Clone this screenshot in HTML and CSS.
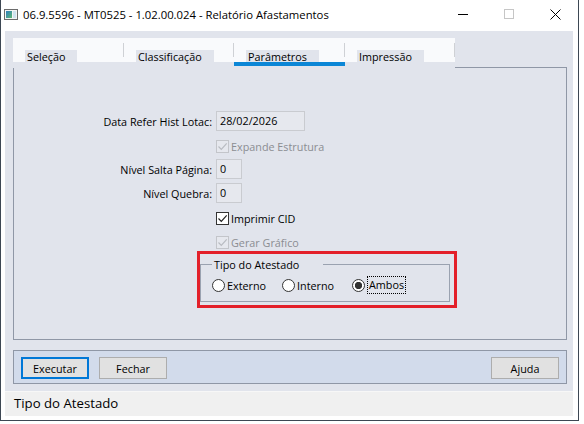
FILE: index.html
```html
<!DOCTYPE html>
<html lang="pt-BR">
<head>
  <meta charset="UTF-8" />
  <title>Relatório Afastamentos</title>
  <link rel="stylesheet" href="styles.css">
</head>
<body>

  <div class="window">
    <div class="titlebar">
      <svg class="app-icon" width="14" height="11" viewBox="0 0 14 11">
        <defs>
          <linearGradient id="ic" x1="0" y1="0" x2="1" y2="1">
            <stop offset="0" stop-color="#2f7fc0"/>
            <stop offset="1" stop-color="#5fb872"/>
          </linearGradient>
        </defs>
        <rect x="0.5" y="0.5" width="13" height="10" fill="#f4f4f4" stroke="#6b6b6b"/>
        <rect x="2" y="2" width="6" height="7" fill="url(#ic)"/>
        <rect x="9" y="2" width="3" height="7" fill="#cfe3ef"/>
      </svg>
      <span class="title">06.9.5596 - MT0525 - 1.02.00.024 - Relatório Afastamentos</span>
      <div class="caption">
        <span class="cap"><svg width="10" height="10" viewBox="0 0 10 10"><path d="M0 5.5h10" stroke="#000"/></svg></span>
        <span class="cap"><svg width="10" height="10" viewBox="0 0 10 10"><rect x="0.5" y="0.5" width="9" height="9" fill="none" stroke="#c6c6c6"/></svg></span>
        <span class="cap"><svg width="11" height="11" viewBox="0 0 11 11"><path d="M0.5 0.5l10 10M10.5 0.5l-10 10" stroke="#000"/></svg></span>
      </div>
    </div>

    <div class="client">
      <div class="tabbar">
        <div class="tabs">
          <div class="tab"><span class="tab-label">Seleção</span></div>
          <div class="tab"><span class="tab-label">Classificação</span></div>
          <div class="tab active"><span class="tab-label">Parâmetros</span></div>
          <div class="tab"><span class="tab-label">Impressão</span></div>
        </div>
        <div class="tab-fill"></div>
      </div>

      <div class="panel">
        <div class="form">
          <span class="lbl">Data Refer Hist Lotac:</span>
          <div class="ctl"><span class="field wide">28/02/2026</span></div>

          <div class="ctl opt disabled">
            <span class="check"><svg width="11" height="11" viewBox="0 0 11 11"><path d="M1.5 5.5l2.8 2.8 5.4-6" fill="none" stroke="#b9bcc2" stroke-width="1.2"/></svg></span>
            Expande Estrutura
          </div>

          <span class="lbl">Nível Salta Página:</span>
          <div class="ctl"><span class="field short">0</span></div>

          <span class="lbl">Nível Quebra:</span>
          <div class="ctl"><span class="field short">0</span></div>

          <div class="ctl opt">
            <span class="check on"><svg width="11" height="11" viewBox="0 0 11 11"><path d="M1.5 5.5l2.8 2.8 5.4-6" fill="none" stroke="#222" stroke-width="1.2"/></svg></span>
            Imprimir CID
          </div>

          <div class="ctl opt disabled">
            <span class="check"><svg width="11" height="11" viewBox="0 0 11 11"><path d="M1.5 5.5l2.8 2.8 5.4-6" fill="none" stroke="#b9bcc2" stroke-width="1.2"/></svg></span>
            Gerar Gráfico
          </div>
        </div>

        <div class="highlight">
          <div class="group">
            <span class="group-title">Tipo do Atestado</span>
            <div class="radios">
              <span class="radio"><span class="dot"></span>Externo</span>
              <span class="radio"><span class="dot"></span>Interno</span>
              <span class="radio"><span class="dot on"></span><span class="focus">Ambos</span></span>
            </div>
          </div>
        </div>
      </div>

      <div class="buttonbar">
        <button class="btn default">Executar</button>
        <button class="btn">Fechar</button>
        <button class="btn help">Ajuda</button>
      </div>
    </div>

    <div class="statusbar">Tipo do Atestado</div>
  </div>

</body>
</html>
```

FILE: styles.css
```css
* {
  box-sizing: border-box;
}
body {
  margin: 0;
  background: #fff;
  color: #000;
  font-family: "Open Sans", "Noto Sans", sans-serif;
  font-size: 10.8px;
}
.window {
  width: 579px;
  height: 421px;
  border: 1px solid #3d4753;
  border-top: 0;
  padding: 0 5px 4px 4px;
  background: #fff;
}

/* barra de título */
.titlebar {
  display: flex;
  align-items: center;
  height: 31px;
  margin: 0 -5px 0 -4px;
  padding: 0 0 3px 3px;
}
.app-icon {
  display: block;
}
.title {
  margin-left: 5px;
  font-size: 11.3px;
}
.caption {
  display: flex;
  margin-left: auto;
}
.cap {
  display: flex;
  align-items: center;
  justify-content: center;
  width: 46px;
  height: 28px;
}
.cap svg {
  display: block;
}

/* área cliente */
.client {
  height: 360px;
  background: #e1e4ec;
  padding: 7px 6px 7px 8px;
}
.tabbar {
  display: flex;
  height: 30px;
}
.tabs {
  display: grid;
  grid-template-columns: 111px 110px 111px 110px;
  align-items: start;
}
.tab {
  position: relative;
  height: 24px;
  padding-left: 12px;
  background: #f9fafc;
}
.tab::before {
  content: "";
  position: absolute;
  right: 0;
  top: 5px;
  width: 1px;
  height: 14px;
  background: #cfd1d5;
}
.tab.active {
  height: 28px;
  border-bottom: 4px solid #0b86d6;
}
.tab-label {
  display: inline-block;
  margin-top: 12px;
  height: 12px;
  line-height: 13px;
  padding: 0 12px 0 2px;
  background: #e1e4ec;
}
.tab-fill {
  flex: 1;
  border-bottom: 1px solid #8f97a6;
}

.panel {
  height: 272px;
  border: 1px solid #8f97a6;
  border-top: 0;
  padding-top: 41px;
}
.form {
  display: grid;
  grid-template-columns: 198px auto;
  grid-auto-rows: 24px;
  column-gap: 4px;
  align-items: center;
}
.lbl {
  text-align: right;
}
.ctl {
  grid-column: 2;
  display: flex;
  align-items: center;
}
.field {
  display: block;
  height: 20px;
  line-height: 18px;
  padding-left: 3px;
  border: 1px solid #c9cbd0;
  background: #e6e8ee;
}
.field.wide {
  width: 89px;
}
.field.short {
  width: 26px;
}
.opt {
  margin-top: 2px;
}
.check {
  display: flex;
  align-items: center;
  justify-content: center;
  width: 13px;
  height: 13px;
  margin-right: 2px;
  border: 1px solid #c3c5ca;
  background: #e6e8ee;
}
.check.on {
  border-color: #333;
  background: #fff;
}
.disabled {
  color: #8b8d92;
}

/* destaque em volta do grupo */
.highlight {
  width: 260px;
  height: 57px;
  margin: -2px 0 0 183px;
  border: 3px solid #e3202a;
}
.group {
  width: 250px;
  height: 38px;
  margin-top: 10px;
  border: 1px solid #9aa2b0;
}
.group-title {
  display: block;
  width: 111px;
  height: 15px;
  line-height: 15px;
  margin: -8px 0 0 11px;
  padding-left: 2px;
  background: #e1e4ec;
}
.radios {
  display: flex;
  margin-top: 4px;
  padding-left: 11px;
}
.radio {
  display: flex;
  align-items: center;
  width: 70px;
  height: 18px;
}
.dot {
  width: 13px;
  height: 13px;
  margin-right: 2px;
  border: 1px solid #333;
  border-radius: 50%;
  background: #fff;
}
.dot.on {
  background: radial-gradient(circle, #333 3.4px, #fff 3.9px);
}
.focus {
  height: 18px;
  line-height: 16px;
  padding: 0 1px;
  border: 1px dotted #000;
}

/* botões */
.buttonbar {
  display: flex;
  gap: 10px;
  height: 34px;
  margin-top: 10px;
  padding: 6px 7px 0 7px;
  border: 1px solid #8f97a6;
  background: #d2dbeb;
}
.btn {
  width: 68px;
  height: 22px;
  padding: 0;
  border: 1px solid #adadad;
  background: #e1e1e1;
  font-family: inherit;
  font-size: 10.8px;
  color: #000;
}
.btn.default {
  border: 2px solid #0078d7;
}
.btn.help {
  margin-left: auto;
}

.statusbar {
  height: 25px;
  border-top: 1px solid #f7f7f7;
  background: #f0f0f0;
  padding-left: 9px;
  line-height: 23px;
  font-size: 13.2px;
}
```
